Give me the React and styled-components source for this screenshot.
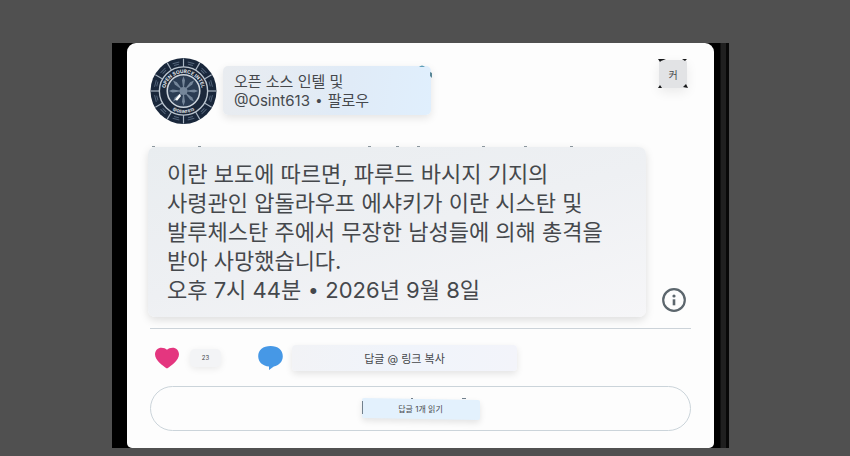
import styled, { createGlobalStyle } from 'styled-components';

const tweetLines = [
  '이란 보도에 따르면, 파루드 바시지 기지의',
  '사령관인 압돌라우프 에샤키가 이란 시스탄 및',
  '발루체스탄 주에서 무장한 남성들에 의해 총격을',
  '받아 사망했습니다.',
];

const spokes = Array.from({ length: 12 }, (_, i) => i * 30);
const rays = Array.from({ length: 8 }, (_, i) => i * 45);

export default function App() {
  return (
    <>
      <GlobalStyle />
      <Page>
        <Frame>
          <Card>
            <Header>
              <Avatar />
              <Author href="#profile">
                <span>오픈 소스 인텔 및</span>
                <span>
                  @Osint613 <Dot>•</Dot> 팔로우
                </span>
                <AuthorMarks viewBox="0 0 16 16" aria-hidden="true">
                  <path d="M3 2Q6-1 9 2Z" fill="#5d9db8" />
                  <path d="M14 7l2 1v5l-2-2Z" fill="#5a8797" />
                </AuthorMarks>
              </Author>
              <MoreButton type="button">
                <CornerMarks viewBox="0 0 32 32" aria-hidden="true">
                  <path d="M1 1h8l-5 2-1 1ZM25 1h5l-2 2ZM1 30l2-3 2 3ZM26 29l3-3 2 4Z" />
                </CornerMarks>
                커
              </MoreButton>
            </Header>

            <Content>
              <Post>
                <PostMarks aria-hidden="true">
                  {[4, 50, 220, 248, 269, 334, 376, 422].map((x) => (
                    <rect key={x} x={x} y="0" width="3" height="1" />
                  ))}
                </PostMarks>
                {tweetLines.map((line) => (
                  <PostLine key={line}>{line}</PostLine>
                ))}
                <PostLine as="time" dateTime="2026-09-08T19:44">
                  오후 7시 44분 <Dot>•</Dot> 2026년 9월 8일
                </PostLine>
              </Post>
              <InfoButton type="button" aria-label="정보">
                <svg viewBox="0 0 24 24" width="24" height="24">
                  <circle cx="12" cy="12" r="10.8" fill="none" stroke="#5c666d" strokeWidth="2.2" />
                  <circle cx="12" cy="8" r="1.6" fill="#5c666d" />
                  <path d="M12 11.3v6" stroke="#5c666d" strokeWidth="2.6" />
                </svg>
              </InfoButton>
            </Content>

            <Actions>
              <LikeButton type="button" aria-label="좋아요">
                <svg viewBox="0 0 24 22" width="24" height="22">
                  <path
                    d="M12 21.6C8 19 0 13.5 0 7.3 0 3.3 3 .7 6.4.7 8.8.7 10.8 1.4 12 2.8 13.2 1.4 15.2.7 17.6.7 21 .7 24 3.3 24 7.3c0 6.2-8 11.7-12 14.3Z"
                    fill="#e4367f"
                  />
                </svg>
              </LikeButton>
              <Count>23</Count>
              <ReplyButton type="button" aria-label="답글">
                <svg viewBox="0 0 25 24" width="25" height="24">
                  <path
                    d="M12.5 0C20 0 24.800 4 24.800 10.300c0 5.700-4 9-9 10.200L11 24v-3.400C4.800 20 .2 16.200.2 10.300.2 4 5 0 12.500 0Z"
                    fill="#4698e6"
                  />
                </svg>
              </ReplyButton>
              <CopyButton type="button">답글 @ 링크 복사</CopyButton>
            </Actions>

            <ReadReplies type="button">
              <ReadLabel>
                <LabelMarks viewBox="0 0 118 24" aria-hidden="true">
                  <path d="M0 4h1v13H0ZM49 1h2v1h-2ZM100 1h4v1h-4Z" />
                </LabelMarks>
                <span>답글 1개 읽기</span>
              </ReadLabel>
            </ReadReplies>
          </Card>
        </Frame>
      </Page>
    </>
  );
}

function Avatar() {
  return (
    <AvatarSvg viewBox="0 0 68 68" role="img" aria-label="Open Source Intel">
      <defs>
        <path id="arc-top" d="M15.5 38a18.8 18.8 0 1 1 37 0" />
        <path id="arc-bottom" d="M11.7 34a22.3 22.3 0 0 0 44.6 0" />
      </defs>
      <circle cx="34" cy="34" r="33.5" fill="#19273b" />
      {spokes.map((deg) => (
        <g key={deg} transform={`rotate(${deg} 34 34)`}>
          <path d="M34 1v9" stroke="#a9b5c2" strokeWidth="1.2" />
          <path
            d="M30.5 4.5h7M31.5 6.5h5"
            transform="rotate(15 34 34)"
            stroke="#53647a"
            strokeWidth="1"
          />
        </g>
      ))}
      <circle cx="34" cy="34" r="24.5" fill="#1b283b" stroke="#bcc6d0" strokeWidth="1.4" />
      <circle cx="34" cy="34" r="16.5" fill="#2b3c53" stroke="#ccd4dc" strokeWidth="1.6" />
      {rays.map((deg) => (
        <path
          key={deg}
          d="M34 34l-1.5-11 1.5-4 1.5 4Z"
          transform={`rotate(${deg} 34 34)`}
          fill="#75869a"
        />
      ))}
      <circle cx="34" cy="34" r="4" fill="#75869a" />
      <path d="M25.5 42.5l4.5-5.5 1.5 2-4 5Z" fill="#fff" />
      <AvatarText $size={5}>
        <textPath href="#arc-top" startOffset="50%">OPEN SOURCE INTEL</textPath>
      </AvatarText>
      <AvatarText $size={4}>
        <textPath href="#arc-bottom" startOffset="50%">@OSINT613</textPath>
      </AvatarText>
    </AvatarSvg>
  );
}

const GlobalStyle = createGlobalStyle`
  * {
    box-sizing: border-box;
  }

  body {
    margin: 0;
    background: #505050;
    font-family: Inter, 'Noto Sans CJK KR', sans-serif;
    color: #45484c;
  }

  button {
    border: 0;
    padding: 0;
    background: none;
    color: inherit;
    font-family: inherit;
    cursor: pointer;
  }
`;

const Page = styled.main`
  padding: 43px 121px 8px 112px;
`;

const Frame = styled.div`
  padding: 0 15px;
  background: linear-gradient(
    to left,
    #080808 3px,
    #202020 3px,
    #202020 8px,
    #000 9px
  );
`;

const Card = styled.article`
  padding: 14px 23px 17px;
  border-radius: 9px 9px 5px 5px;
  background: #fdfdfd;
`;

const Header = styled.header`
  display: flex;
  align-items: flex-start;
  gap: 6px;
`;

const AvatarSvg = styled.svg`
  flex: none;
  width: 67px;
  height: 68px;
`;

const AvatarText = styled.text`
  font-size: ${({ $size }) => $size}px;
  font-weight: 700;
  fill: #e4e9ee;
  text-anchor: middle;
`;

const Dot = styled.span`
  padding: 0 2px;
  font-family: 'Liberation Sans', sans-serif;
`;

const Author = styled.a`
  position: relative;
  display: flex;
  flex-direction: column;
  width: 208px;
  margin-top: 9px;
  padding: 6px 11px 5px;
  border-radius: 5px;
  background: linear-gradient(100deg, #e9ecf0, #e0ebf7 60%, #e0effd);
  box-shadow: 0 3px 8px #0000001a;
  font-size: 15px;
  line-height: 19px;
  color: #45484c;
  text-decoration: none;
`;

const AuthorMarks = styled.svg`
  position: absolute;
  top: -1px;
  right: -1px;
  width: 16px;
  height: 16px;
`;

const MoreButton = styled.button`
  position: relative;
  width: 28px;
  height: 28px;
  margin: 3px 4px 0 auto;
  border-radius: 3px;
  background: #e2e3e5;
  box-shadow: 0 4px 12px #00000014;
  font-size: 10px;
`;

const CornerMarks = styled.svg`
  position: absolute;
  inset: -2px;
  width: 32px;
  height: 32px;
  fill: #17181a;
`;

const Content = styled.div`
  display: flex;
  align-items: flex-end;
  justify-content: space-between;
  margin: 22px 0 0 -2px;
  padding: 0 5px 11px 0;
`;

const Post = styled.div`
  position: relative;
  width: 498px;
  padding: 13px 19px 12px;
  border-radius: 7px;
  background: linear-gradient(165deg, #e9edf0, #eef0f3 50%, #f6f6f8);
  box-shadow: 0 3px 9px #00000021;
`;

const PostMarks = styled.svg`
  position: absolute;
  top: -1px;
  left: 0;
  width: 100%;
  height: 2px;
  fill: #8b969d;
`;

const PostLine = styled.p`
  display: block;
  margin: 0;
  font-size: 22px;
  line-height: 29px;
  white-space: nowrap;
`;

const InfoButton = styled.button`
  display: flex;
  margin-bottom: 5px;
`;

const Actions = styled.div`
  display: flex;
  align-items: center;
  height: 58px;
  padding-left: 5px;
  border-top: 1px solid #ccd3d9;
`;

const LikeButton = styled.button`
  display: flex;
`;

const Count = styled.span`
  width: 31px;
  margin: 0 37px 0 11px;
  border-radius: 5px;
  background: #f3f4f6;
  box-shadow: 0 2px 7px #00000014;
  font-size: 6px;
  line-height: 18px;
  text-align: center;
`;

const ReplyButton = styled.button`
  display: flex;
`;

const CopyButton = styled.button`
  width: 225px;
  height: 26px;
  margin-left: 9px;
  border-radius: 4px;
  background: linear-gradient(100deg, #f2f3f6, #f0f4fb 50%, #f3f4fa);
  box-shadow: 0 3px 7px #0000001a;
  font-size: 11px;
`;

const ReadReplies = styled.button`
  display: flex;
  align-items: center;
  justify-content: center;
  width: 100%;
  height: 45px;
  border: 1px solid #cbd4da;
  border-radius: 23px;
`;

const ReadLabel = styled.span`
  position: relative;
  width: 118px;
  font-size: 8px;
  line-height: 22px;

  &::before {
    content: '';
    position: absolute;
    inset: 1px 0;
    border-radius: 2px;
    background: #e3f1fd;
    box-shadow: 0 3px 6px #0000001a;
    transform: skewY(1deg);
  }

  span {
    position: relative;
  }
`;

const LabelMarks = styled.svg`
  position: absolute;
  top: -1px;
  left: 0;
  width: 118px;
  height: 24px;
  fill: #71808d;
`;
